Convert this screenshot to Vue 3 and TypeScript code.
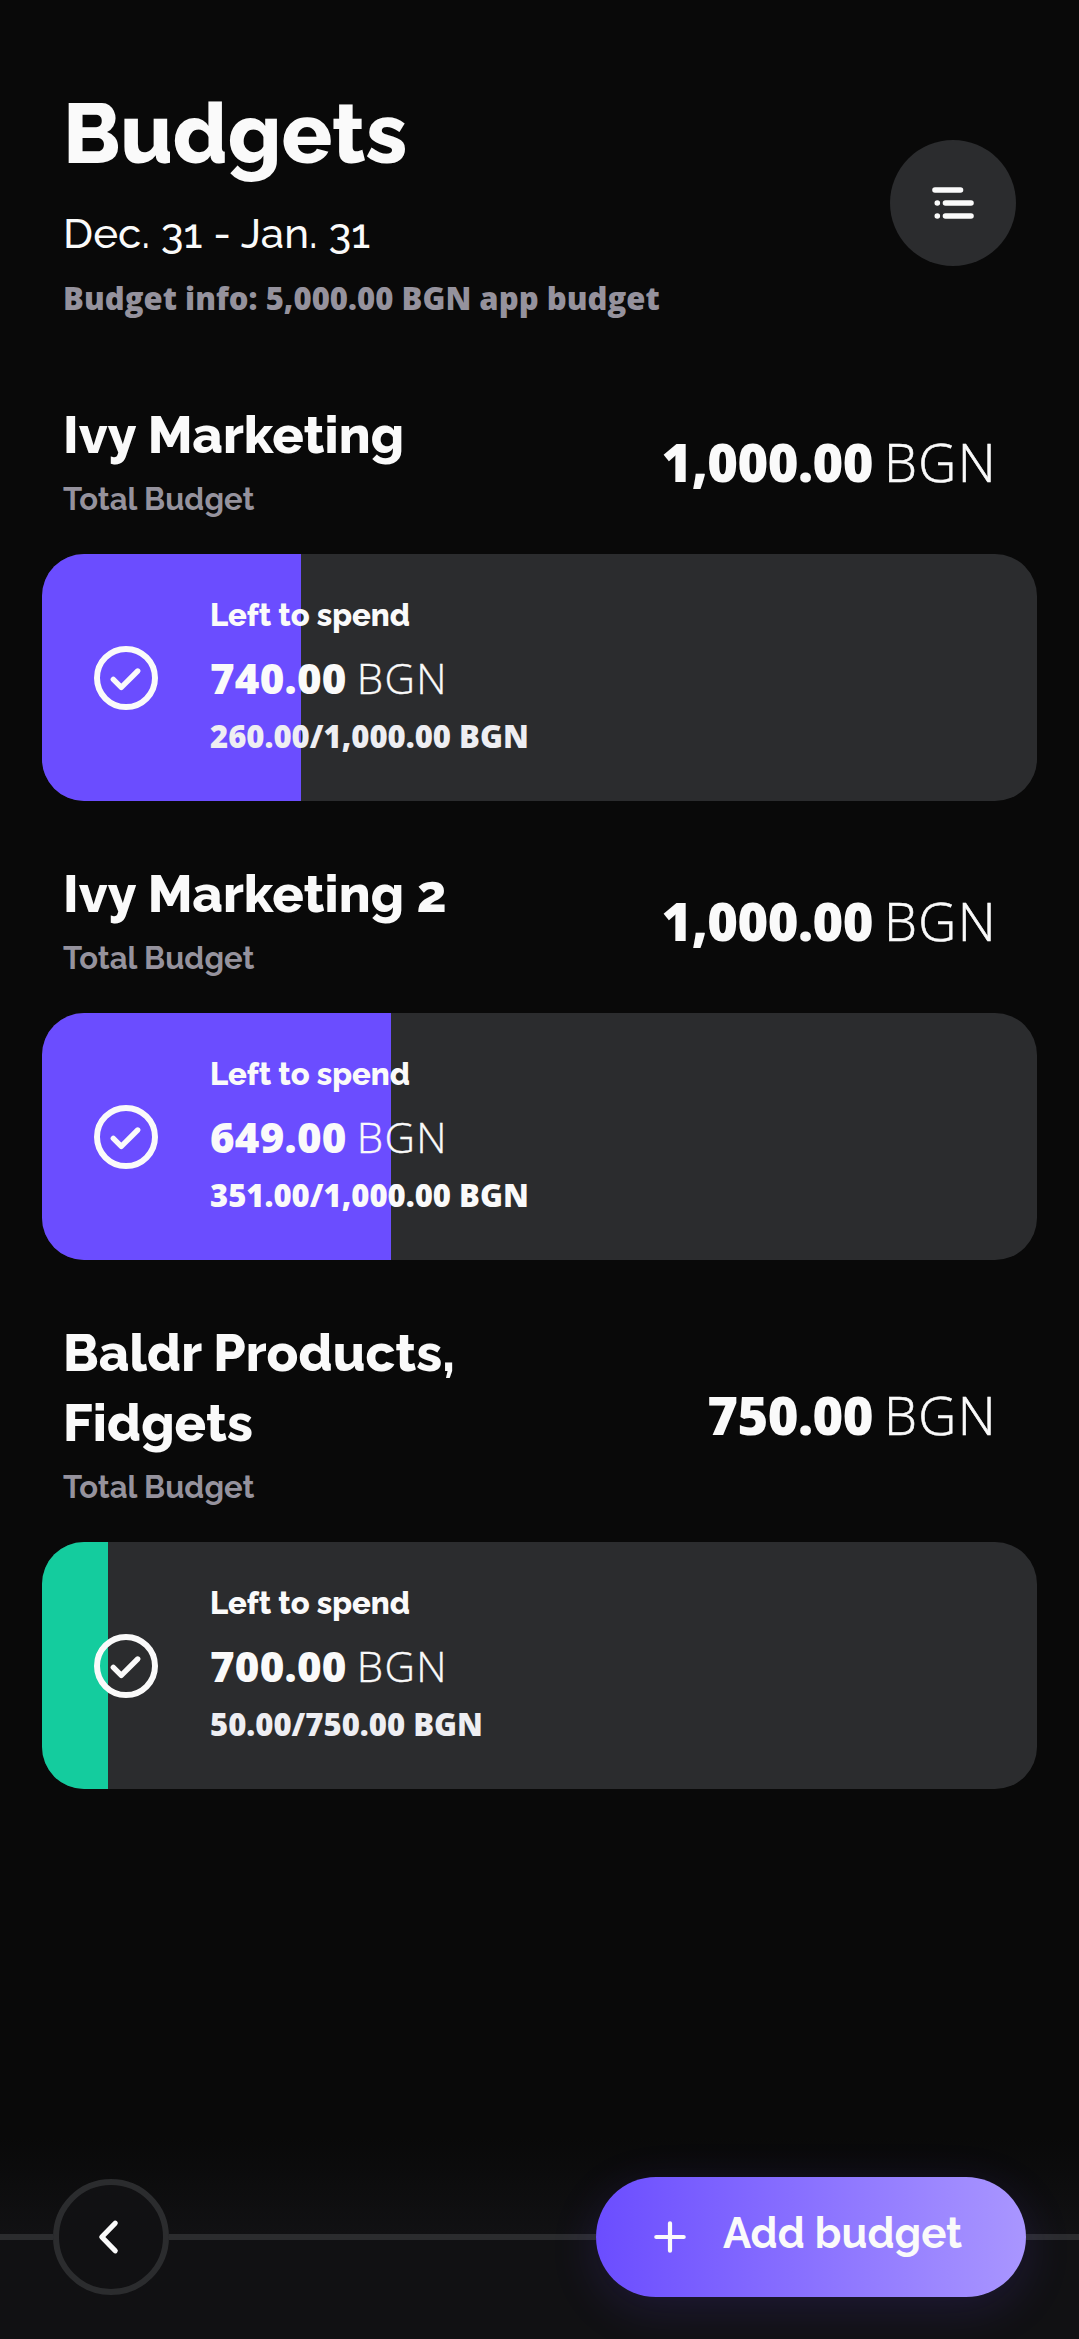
<script setup lang="ts">
interface Budget {
  name: string
  total: string
  left: string
  spent: string
  percent: number
  color: string
  detailColor: string
}

const currency = 'BGN'

const budgets: Budget[] = [
  { name: 'Ivy Marketing', total: '1,000.00', left: '740.00', spent: '260.00', percent: 26, color: '#6b4dff', detailColor: '#eeeef2' },
  { name: 'Ivy Marketing 2', total: '1,000.00', left: '649.00', spent: '351.00', percent: 35.1, color: '#6b4dff', detailColor: '#fafafa' },
  { name: 'Baldr Products, Fidgets', total: '750.00', left: '700.00', spent: '50.00', percent: 6.667, color: '#14cc9e', detailColor: '#eeeef2' },
]
</script>

<template>
  <main class="screen">
    <header class="header">
      <div>
        <h1 class="title">Budgets</h1>
        <p class="period">Dec. 31 - Jan. 31</p>
        <p class="info">Budget info: 5,000.00 BGN app budget</p>
      </div>
      <button class="reorder" aria-label="Reorder">
        <svg width="126" height="126" viewBox="0 0 126 126" fill="none" stroke="#fafafa" stroke-width="5.6" stroke-linecap="round">
          <path d="M45 50H70.5M55.5 63H81M55.5 76H81M47.3 63h.01M47.3 76h.01" />
        </svg>
      </button>
    </header>

    <section v-for="b in budgets" :key="b.name" class="budget">
      <div class="summary">
        <div class="label">
          <h2 class="name">{{ b.name }}</h2>
          <p class="caption">Total Budget</p>
        </div>
        <p class="amount"><b>{{ b.total }}</b><span>{{ currency }}</span></p>
      </div>
      <div class="card">
        <div class="fill" :style="{ width: b.percent + '%', background: b.color }"></div>
        <svg class="check" width="64" height="64" viewBox="0 0 64 64" fill="none" stroke="#fafafa" stroke-linecap="round" stroke-linejoin="round">
          <circle cx="32" cy="32" r="29" stroke-width="6" />
          <path d="M19.3 33.3L27.3 41.3L43.7 25" stroke-width="5.4" />
        </svg>
        <div class="details">
          <p class="left-label">Left to spend</p>
          <p class="left"><b>{{ b.left }}</b><span>{{ currency }}</span></p>
          <p class="ratio" :style="{ color: b.detailColor }">{{ b.spent }}/{{ b.total }} {{ currency }}</p>
        </div>
      </div>
    </section>

    <footer class="footer">
      <i class="rule start"></i>
      <button class="back" aria-label="Back">
        <svg width="104" height="104" viewBox="0 0 104 104" fill="none" stroke="#fafafa" stroke-width="5.2" stroke-linecap="round" stroke-linejoin="round">
          <path d="M56.2 38.2L42.8 52L56.2 65.8" />
        </svg>
      </button>
      <i class="rule middle"></i>
      <button class="add">
        <svg width="32" height="32" viewBox="0 0 32 32" fill="none" stroke="#fafafa" stroke-width="4.2" stroke-linecap="round">
          <path d="M16 2.3V29.7M2.3 16H29.7" />
        </svg>
        <span>Add budget</span>
      </button>
      <i class="rule end"></i>
    </footer>
  </main>
</template>

<style>
body {
  background: #090909;
}
</style>

<style scoped>
.screen {
  box-sizing: border-box;
  width: 1079px;
  height: 2339px;
  padding-top: 84px;
  display: flex;
  flex-direction: column;
  overflow: hidden;
  background: #090909;
  color: #fafafa;
  font-family: Raleway, Lato, sans-serif;
}

h1,
h2,
p {
  margin: 0;
}

button {
  padding: 0;
  border: 0;
  color: inherit;
  font: inherit;
}

svg {
  display: block;
}

.header {
  display: flex;
  justify-content: space-between;
  align-items: flex-start;
  padding: 0 63px;
  height: 315.5px;
}

.title {
  font-size: 84px;
  line-height: 100px;
  font-weight: 800;
}

.period {
  margin-top: 25px;
  font-size: 42px;
  line-height: 50px;
  font-weight: 500;
  letter-spacing: 0.1px;
}

.info {
  margin-top: 18px;
  font-family: "Open Sans", sans-serif;
  font-size: 31px;
  line-height: 42px;
  font-weight: 800;
  letter-spacing: 0.03px;
  color: #95929d;
}

.reorder {
  margin-top: 56px;
  width: 126px;
  height: 126px;
  border-radius: 50%;
  background: #2b2c2e;
}

.budget {
  margin-bottom: 57.5px;
}

.summary {
  display: flex;
  justify-content: space-between;
  align-items: center;
  padding: 0 82px 0 63px;
  margin-bottom: 36.5px;
}

.label {
  width: 440px;
}

.name {
  font-size: 52.2px;
  line-height: 70px;
  font-weight: 800;
  letter-spacing: 0.07px;
}

.caption {
  margin-top: 11px;
  font-size: 31px;
  line-height: 37px;
  font-weight: 700;
  letter-spacing: 0.05px;
  color: #95929d;
}

.amount,
.left {
  font-family: "Open Sans", sans-serif;
  white-space: nowrap;
}

.amount b,
.left b {
  font-weight: 800;
}

.amount span,
.left span {
  font-weight: 300;
  letter-spacing: 1.4px;
  -webkit-text-stroke: 0.6px currentColor;
}

.amount {
  padding-top: 6px;
  font-size: 52.5px;
  line-height: 70px;
}

.amount b {
  letter-spacing: -0.55px;
}

.amount span {
  margin-left: 11px;
}

.card {
  position: relative;
  display: flex;
  align-items: center;
  height: 247px;
  margin: 0 42px;
  border-radius: 42px;
  overflow: hidden;
  background: #2b2c2e;
}

.fill {
  position: absolute;
  inset: 0 auto 0 0;
}

.check {
  position: relative;
  margin-left: 52px;
}

.details {
  position: relative;
  margin-left: 52px;
}

.left-label {
  font-size: 31px;
  line-height: 37px;
  font-weight: 800;
}

.left {
  margin-top: 18px;
  font-size: 42px;
  line-height: 52px;
}

.left b {
  letter-spacing: 0.25px;
}

.left span {
  margin-left: 10px;
  -webkit-text-stroke-width: 0.4px;
}

.ratio {
  margin-top: 14px;
  margin-bottom: 4px;
  font-family: "Open Sans", sans-serif;
  font-size: 31px;
  line-height: 36px;
  font-weight: 800;
}

.footer {
  display: flex;
  align-items: center;
  box-sizing: border-box;
  height: 219px;
  margin-top: auto;
  padding-top: 15px;
  background: linear-gradient(#090909 8%, #111113 52%);
}

.rule {
  height: 6px;
  background: #2b2c2e;
}

.start {
  width: 53px;
}

.middle {
  flex: 1;
}

.end {
  width: 53px;
}

.back {
  box-sizing: border-box;
  width: 116px;
  height: 116px;
  border: 6px solid #2b2c2e;
  border-radius: 50%;
  background: #111113;
}

.add {
  position: relative;
  display: flex;
  align-items: center;
  box-sizing: border-box;
  width: 430px;
  height: 120px;
  padding-left: 58px;
  border-radius: 60px;
  background: linear-gradient(90deg, #6b4dff, #a996ff);
  box-shadow: 0 12px 48px rgba(107, 77, 255, 0.15);
  font-size: 42px;
  line-height: 50px;
  font-weight: 700;
}

.add span {
  margin: 0 0 6px 37px;
}
</style>
